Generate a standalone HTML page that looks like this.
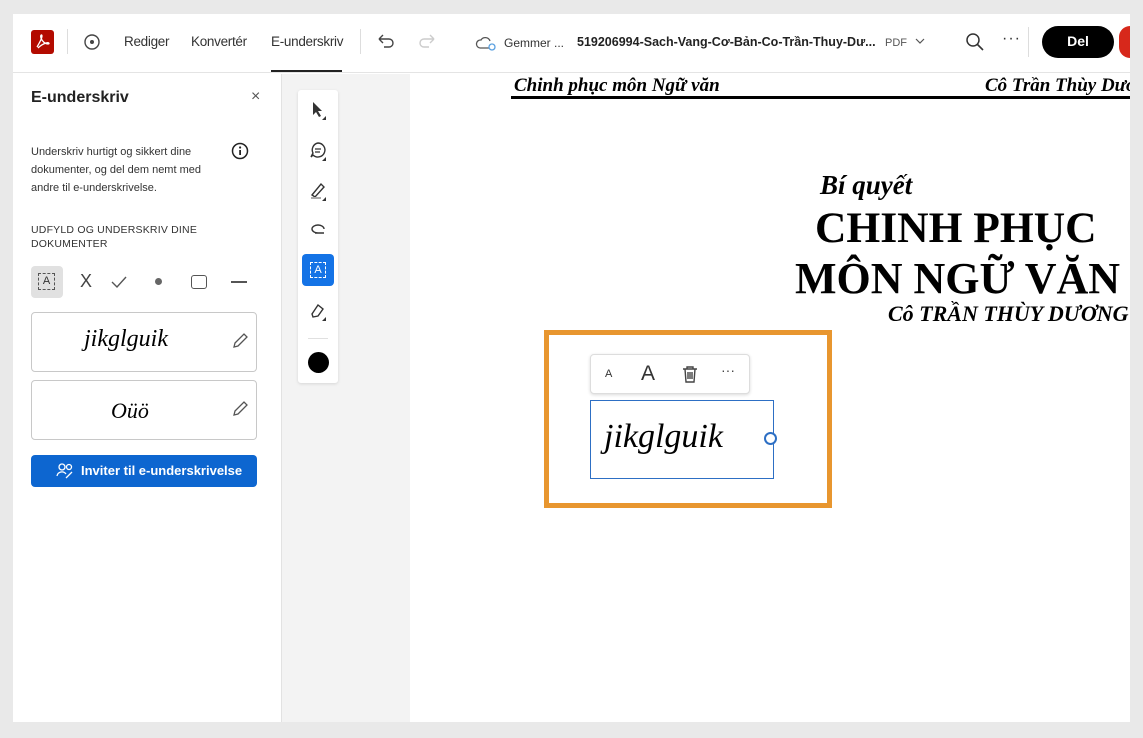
<!DOCTYPE html>
<html><head><meta charset="utf-8"><style>
*{margin:0;padding:0;box-sizing:border-box}
body{width:1143px;height:738px;background:#e9e9e9;position:relative;overflow:hidden;font-family:"Liberation Sans",sans-serif;color:#222}
.abs{position:absolute}
.win{left:13px;top:14px;width:1117px;height:708px;background:#fff}
.hdr{left:13px;top:14px;width:1117px;height:59px;background:#fff;border-bottom:1px solid #e4e4e4}
.t{position:absolute;font-size:13.5px;color:#333;top:34px}
.serif{font-family:"Liberation Serif",serif;color:#000}
.ic{position:absolute}
</style></head><body>
<div class="abs win"></div>
<div class="abs hdr"></div>
<div class="abs" style="left:31px;top:30px;width:23px;height:24px;background:#b30b00;border-radius:3px"></div>
<svg class="ic" style="left:31px;top:30px" width="23" height="24"><path d="M6 17 C9 12 11 8 11 6 C11 4 9 5 10 8 C11 11 14 14 17 14 C19 14 18 12 15 13 C12 14 9 16 7 18" stroke="#fff" stroke-width="1.3" fill="none"/></svg>
<div class="abs" style="left:67px;top:29px;width:1px;height:25px;background:#ddd"></div>
<svg class="ic" style="left:83px;top:33px" width="18" height="18"><circle cx="9" cy="9" r="7" stroke="#444" stroke-width="1.4" fill="none"/><circle cx="9" cy="9" r="2" fill="#444"/></svg>
<div class="t" style="left:124px;letter-spacing:-.3px">Rediger</div>
<div class="t" style="left:191px;letter-spacing:-.3px">Konvertér</div>
<div class="t" style="left:271px;letter-spacing:-.3px">E-underskriv</div>
<div class="abs" style="left:271px;top:70px;width:71px;height:2px;background:#222"></div>
<div class="abs" style="left:360px;top:29px;width:1px;height:25px;background:#ddd"></div>
<svg class="ic" style="left:376px;top:33px" width="20" height="16"><path d="M3 6 L7 2 M3 6 L7 10 M3 6 H13 a4 4 0 0 1 0 8 H8" stroke="#444" stroke-width="1.4" fill="none"/></svg>
<svg class="ic" style="left:417px;top:33px" width="20" height="16"><path d="M17 6 L13 2 M17 6 L13 10 M17 6 H7 a4 4 0 0 0 0 8 H12" stroke="#ccc" stroke-width="1.4" fill="none"/></svg>
<svg class="ic" style="left:475px;top:33px" width="22" height="18"><path d="M5 15 H14 M5 15 a4 4 0 0 1 1-8 a5 5 0 0 1 9 1" stroke="#555" stroke-width="1.3" fill="none"/><circle cx="17" cy="14" r="3" stroke="#5aa0e0" stroke-width="1.3" fill="none"/></svg>
<div class="t" style="left:504px;font-size:12px;top:36px">Gemmer ...</div>
<div class="t" style="left:577px;font-size:12.5px;top:35px;font-weight:bold;color:#222">519206994-Sach-Vang-Cơ-Bản-Co-Trần-Thuy-Dư...</div>
<div class="t" style="left:885px;font-size:11px;top:37px;color:#555">PDF</div>
<svg class="ic" style="left:915px;top:37px" width="10" height="8"><path d="M1 2 L5 6 L9 2" stroke="#555" stroke-width="1.2" fill="none"/></svg>
<svg class="ic" style="left:965px;top:32px" width="20" height="20"><circle cx="8" cy="8" r="6" stroke="#333" stroke-width="1.5" fill="none"/><path d="M12.5 12.5 L18 18" stroke="#333" stroke-width="1.6"/></svg>
<div class="t" style="left:1002px;top:30px;font-size:16px;color:#333;letter-spacing:1px">···</div>
<div class="abs" style="left:1028px;top:27px;width:1px;height:30px;background:#ddd"></div>
<div class="abs" style="left:1042px;top:26px;width:72px;height:32px;background:#000;border-radius:16px;color:#fff;font-weight:bold;font-size:14px;text-align:center;line-height:31px">Del</div>
<div class="abs" style="left:1119px;top:26px;width:11px;height:32px;background:#d7281b;border-radius:16px 0 0 16px"></div>

<div class="abs" style="left:281px;top:74px;width:1px;height:648px;background:#e2e2e2"></div>
<div class="abs" style="left:31px;top:89px;font-size:16px;font-weight:bold;color:#222">E-underskriv</div>
<div class="abs" style="left:251px;top:88px;font-size:16px;color:#555">×</div>
<div class="abs" style="left:31px;top:143px;font-size:11px;line-height:18px;color:#333;width:190px">Underskriv hurtigt og sikkert dine dokumenter, og del dem nemt med andre til e-underskrivelse.</div>
<svg class="ic" style="left:231px;top:142px" width="18" height="18"><circle cx="9" cy="9" r="7.5" stroke="#222" stroke-width="1.5" fill="none"/><rect x="8.2" y="8" width="1.8" height="5" fill="#222"/><circle cx="9.1" cy="5.5" r="1.1" fill="#222"/></svg>
<div class="abs" style="left:31px;top:223px;font-size:10.5px;line-height:14px;color:#333;letter-spacing:.2px">UDFYLD OG UNDERSKRIV DINE<br>DOKUMENTER</div>
<div class="abs" style="left:31px;top:266px;width:32px;height:32px;background:#e1e1e1;border-radius:4px"></div>
<div class="abs" style="left:38px;top:273px;width:17px;height:17px;border:1px dashed #555;font-size:11px;text-align:center;line-height:15px;color:#333">A</div>
<div class="abs" style="left:80px;top:271px;font-size:18px;color:#444">X</div>
<svg class="ic" style="left:111px;top:275px" width="16" height="14"><path d="M1 7 L6 12 L15 2" stroke="#555" stroke-width="1.4" fill="none"/></svg>
<div class="abs" style="left:155px;top:278px;width:7px;height:7px;background:#666;border-radius:50%"></div>
<div class="abs" style="left:191px;top:275px;width:16px;height:14px;border:1.5px solid #555;border-radius:3px"></div>
<div class="abs" style="left:231px;top:281px;width:16px;height:1.5px;background:#555"></div>
<div class="abs" style="left:31px;top:312px;width:226px;height:60px;border:1px solid #c8c8c8;border-radius:4px"></div>
<div class="abs serif" style="left:84px;top:326px;font-size:24px;font-style:italic;font-weight:300">jikglguik</div>
<svg class="ic" style="left:231px;top:332px" width="18" height="18"><path d="M3 15 L4 11 L13 2 L16 5 L7 14 Z" stroke="#555" stroke-width="1.3" fill="none"/></svg>
<div class="abs" style="left:31px;top:380px;width:226px;height:60px;border:1px solid #c8c8c8;border-radius:4px"></div>
<div class="abs serif" style="left:111px;top:398px;font-size:22px;font-style:italic">Oüö</div>
<svg class="ic" style="left:231px;top:400px" width="18" height="18"><path d="M3 15 L4 11 L13 2 L16 5 L7 14 Z" stroke="#555" stroke-width="1.3" fill="none"/></svg>
<div class="abs" style="left:31px;top:455px;width:226px;height:32px;background:#0d66d0;border-radius:4px;color:#fff;font-size:13px;font-weight:bold;line-height:32px;padding-left:50px">Inviter til e-underskrivelse</div>
<svg class="ic" style="left:56px;top:462px" width="18" height="18"><circle cx="6" cy="5" r="3" stroke="#fff" stroke-width="1.3" fill="none"/><circle cx="13" cy="5" r="2.5" stroke="#fff" stroke-width="1.3" fill="none"/><path d="M1 14 a5 5 0 0 1 9-2 M10 16 L16 10" stroke="#fff" stroke-width="1.3" fill="none"/></svg>

<div class="abs" style="left:282px;top:74px;width:128px;height:648px;background:#f3f3f3"></div>
<div class="abs" style="left:298px;top:90px;width:40px;height:293px;background:#fff;border-radius:3px;box-shadow:0 1px 3px rgba(0,0,0,.12)"></div>
<svg class="ic" style="left:308px;top:100px" width="22" height="22"><path d="M5 2 L5 15 L8 12 L11 17 L13 16 L10 11 L14 11 Z" fill="#333"/><path d="M18 16 L18 20 L14 20 Z" fill="#333"/></svg>
<svg class="ic" style="left:308px;top:140px" width="22" height="22"><path d="M10 3 a7 7 0 1 1 -5 12 L3 17 L5 13 a7 7 0 0 1 5-10 Z" stroke="#333" stroke-width="1.4" fill="none"/><path d="M7 9 H13 M7 12 H12" stroke="#333" stroke-width="1.3"/><path d="M18 17 L18 21 L14 21 Z" fill="#333"/></svg>
<svg class="ic" style="left:308px;top:180px" width="22" height="22"><path d="M4 15 L13 4 L16 7 L7 17 Z" stroke="#333" stroke-width="1.4" fill="none"/><path d="M3 18 H13" stroke="#aaa" stroke-width="2"/><path d="M18 17 L18 21 L14 21 Z" fill="#333"/></svg>
<svg class="ic" style="left:308px;top:220px" width="22" height="22"><path d="M16 9 a6 4 0 1 0 -6 4 H16 M7 13 H10" stroke="#333" stroke-width="1.4" fill="none"/></svg>
<div class="abs" style="left:302px;top:254px;width:32px;height:32px;background:#1473e6;border-radius:4px"></div>
<div class="abs" style="left:310px;top:262px;width:16px;height:16px;border:1px dashed #fff;color:#fff;font-size:11px;text-align:center;line-height:14px">A</div>
<svg class="ic" style="left:308px;top:300px" width="22" height="22"><path d="M4 14 L10 5 L15 9 L10 16 L5 17 Z" stroke="#333" stroke-width="1.4" fill="none"/><path d="M18 17 L18 21 L14 21 Z" fill="#333"/></svg>
<div class="abs" style="left:308px;top:338px;width:20px;height:1px;background:#e0e0e0"></div>
<div class="abs" style="left:308px;top:352px;width:21px;height:21px;background:#000;border-radius:50%"></div>

<div class="abs serif" style="left:514px;top:75px;font-size:19px;font-style:italic;font-weight:bold">Chinh phục môn Ngữ văn</div>
<div class="abs serif" style="left:985px;top:75px;font-size:19px;font-style:italic;font-weight:bold;white-space:nowrap;width:145px;overflow:hidden">Cô Trần Thùy Dương</div>
<div class="abs" style="left:511px;top:96px;width:619px;height:3px;background:#000"></div>
<div class="abs serif" style="left:820px;top:170px;font-size:27px;font-style:italic;font-weight:bold">Bí quyết</div>
<div class="abs serif" style="left:815px;top:203px;font-size:43.5px;font-weight:bold;white-space:nowrap">CHINH PHỤC</div>
<div class="abs serif" style="left:795px;top:253px;font-size:44px;font-weight:bold;white-space:nowrap">MÔN NGỮ VĂN</div>
<div class="abs serif" style="left:888px;top:301px;font-size:22px;font-style:italic;font-weight:bold;white-space:nowrap">Cô TRẦN THÙY DƯƠNG</div>

<div class="abs" style="left:544px;top:330px;width:288px;height:178px;border:5px solid #e8962f"></div>
<div class="abs" style="left:590px;top:354px;width:160px;height:40px;background:#fff;border:1px solid #ddd;border-radius:4px;box-shadow:0 1px 3px rgba(0,0,0,.15)"></div>
<div class="abs" style="left:605px;top:368px;font-size:11px;color:#333">A</div>
<div class="abs" style="left:641px;top:362px;font-size:21px;color:#333">A</div>
<svg class="ic" style="left:680px;top:364px" width="20" height="20"><path d="M3 5 H17 M7 5 V3 H13 V5 M5 5 L6 18 H14 L15 5 M8 8 V15 M10 8 V15 M12 8 V15" stroke="#444" stroke-width="1.4" fill="none"/></svg>
<div class="abs" style="left:721px;top:362px;font-size:14px;color:#444">···</div>
<div class="abs" style="left:590px;top:400px;width:184px;height:79px;border:1px solid #2d6fc4"></div>
<div class="abs serif" style="left:604px;top:418px;font-size:34px;font-style:italic">jikglguik</div>
<div class="abs" style="left:764px;top:432px;width:13px;height:13px;border:2px solid #2d6fc4;border-radius:50%;background:#fff"></div>
</body></html>
